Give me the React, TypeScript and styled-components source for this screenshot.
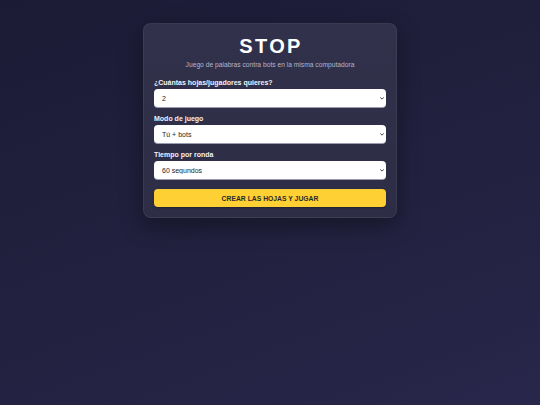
import React from "react";
import styled, { createGlobalStyle } from "styled-components";

const Global = createGlobalStyle`
  html, body { margin: 0; padding: 0; }
  body {
    font-family: "Liberation Sans", Arial, sans-serif;
    background: linear-gradient(160deg, #1b1b36 0%, #22213f 55%, #28264a 100%);
    min-height: 100vh;
  }
`;

const Page = styled.div`
  min-height: 405px;
  display: flex;
  justify-content: center;
  align-items: flex-start;
  padding-top: 23px;
  box-sizing: border-box;
`;

const Card = styled.div`
  width: 254px;
  box-sizing: border-box;
  padding: 10px 10px 10px;
  border-radius: 8px;
  background: linear-gradient(180deg, #31314b 0%, #2d2d46 100%);
  border: 1px solid rgba(255, 255, 255, 0.06);
  box-shadow: 0 8px 22px rgba(0, 0, 0, 0.35);
  display: flex;
  flex-direction: column;
`;

const Title = styled.h1`
  margin: 0;
  text-align: center;
  color: #ffffff;
  font-size: 20px;
  line-height: 25px;
  font-weight: 700;
  letter-spacing: 2.4px;
  padding-left: 2px;
`;

const Subtitle = styled.p`
  margin: 1px 0 9px;
  text-align: center;
  color: #b4b4cc;
  font-size: 6.7px;
  line-height: 9px;
`;

const Field = styled.div`
  display: flex;
  flex-direction: column;
  gap: 2px;
  margin-bottom: 6px;
`;

const Label = styled.label`
  color: #f2f2f6;
  font-size: 7px;
  font-weight: 700;
  line-height: 9px;
`;

const SelectWrap = styled.div`
  position: relative;
  height: 19px;
`;

const Select = styled.select`
  display: block;
  appearance: none;
  -webkit-appearance: none;
  height: 19px;
  width: 100%;
  margin: 0;
  border-radius: 4px;
  border: none;
  border-bottom: 1px solid #9a9ab0;
  background: #ffffff;
  color: #1e1e1e;
  font-family: "Liberation Sans", Arial, sans-serif;
  font-size: 7px;
  padding: 0 12px 0 8px;
  box-sizing: border-box;
  outline: none;
`;

const Chevron = styled.svg`
  position: absolute;
  right: 2px;
  top: 8px;
  width: 4px;
  height: 3px;
  pointer-events: none;
`;

const Button = styled.button`
  margin-top: 3px;
  height: 18px;
  border: none;
  border-radius: 4px;
  background: #ffd033;
  color: #2a2a2a;
  font-family: "Liberation Sans", Arial, sans-serif;
  font-size: 6.8px;
  font-weight: 700;
  box-shadow: 0 1px 2px rgba(0, 0, 0, 0.3);
`;

type Opt = { value: string; label: string };

function Dropdown({ value, options }: { value: string; options: Opt[] }) {
  return (
    <SelectWrap>
      <Select defaultValue={value}>
        {options.map((o) => (
          <option key={o.value} value={o.value}>
            {o.label}
          </option>
        ))}
      </Select>
      <Chevron viewBox="0 0 8 6">
        <path d="M1 1.2 L4 4.4 L7 1.2" fill="none" stroke="#333" strokeWidth="1.8" strokeLinecap="round" strokeLinejoin="round" />
      </Chevron>
    </SelectWrap>
  );
}

export default function App() {
  return (
    <>
      <Global />
      <Page>
        <Card>
          <Title>STOP</Title>
          <Subtitle>Juego de palabras contra bots en la misma computadora</Subtitle>
          <Field>
            <Label>¿Cuántas hojas/jugadores quieres?</Label>
            <Dropdown
              value="2"
              options={[
                { value: "2", label: "2" },
                { value: "3", label: "3" },
                { value: "4", label: "4" },
              ]}
            />
          </Field>
          <Field>
            <Label>Modo de juego</Label>
            <Dropdown
              value="tu"
              options={[
                { value: "tu", label: "Tú + bots" },
                { value: "bots", label: "Solo bots" },
              ]}
            />
          </Field>
          <Field>
            <Label>Tiempo por ronda</Label>
            <Dropdown
              value="60"
              options={[
                { value: "30", label: "30 segundos" },
                { value: "60", label: "60 segundos" },
                { value: "90", label: "90 segundos" },
              ]}
            />
          </Field>
          <Button>CREAR LAS HOJAS Y JUGAR</Button>
        </Card>
      </Page>
    </>
  );
}
